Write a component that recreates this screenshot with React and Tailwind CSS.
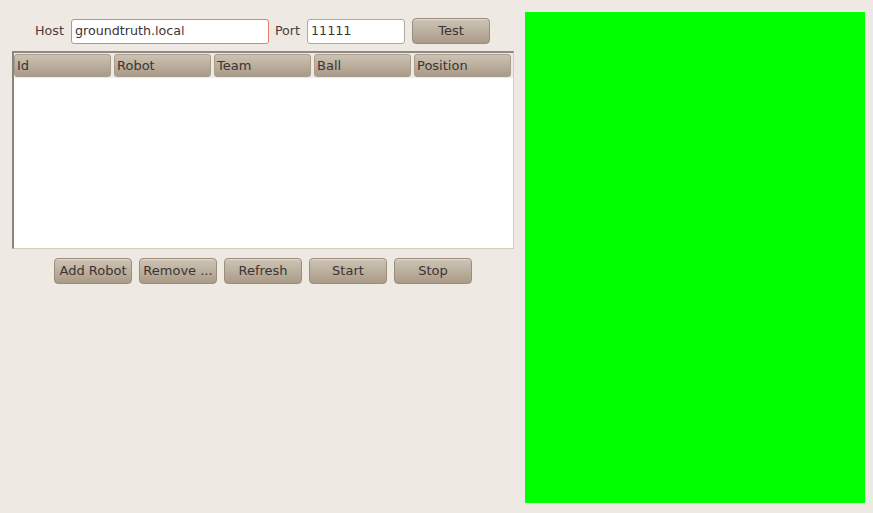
import React from 'react'

const btn =
  'h-[26px] w-[78px] rounded-[4px] border border-[#9a8d7b] bg-gradient-to-b from-[#cfc4b6] to-[#a99b87] text-[13px] text-[#3c3434] flex items-center justify-center shadow-[inset_0_1px_0_rgba(255,255,255,0.35)]'

const HeaderCell = ({ label }) => (
  <div className='h-[23px] flex-1 rounded-[3px] border border-[#a89c8a] bg-gradient-to-b from-[#cdc2b3] to-[#a99b88] px-[2px] flex items-center text-[13px] text-[#3c3434]'>
    {label}
  </div>
)

export default function App() {
  const columns = ['Id', 'Robot', 'Team', 'Ball', 'Position']
  const actions = ['Add Robot', 'Remove ...', 'Refresh', 'Start', 'Stop']

  return (
    <div
      className='w-[873px] h-[513px] bg-[#eee9e2] flex'
      style={{ fontFamily: '"DejaVu Sans", sans-serif' }}
    >
      <div className='w-[502px] ml-[12px] flex flex-col'>
        <div className='flex items-center mt-[18px] h-[26px]'>
          <span className='ml-[23px] text-[12.7px] text-[#4a3c3c]'>Host</span>
          <div className='ml-[7px] h-[25px] w-[198px] rounded-[3px] border border-[#e8806e] bg-white px-[3px] flex items-center text-[12.7px] text-[#3c3434]'>
            groundtruth.local
          </div>
          <span className='ml-[6px] text-[12.7px] text-[#4a3c3c]'>Port</span>
          <div className='ml-[7px] h-[25px] w-[98px] rounded-[3px] border border-[#b3a998] bg-white px-[3px] flex items-center text-[12.7px] text-[#3c3434]'>
            11111
          </div>
          <button className={btn + ' ml-[7px]'}>Test</button>
        </div>

        <div className='mt-[7px] w-[502px] h-[198px] border-t-2 border-l-2 border-r border-b border-t-[#8f8981] border-l-[#8a857e] border-r-[#d9cdb9] border-b-[#d9cdb9] bg-white flex flex-col'>
          <div className='flex gap-[3px] pt-[1px] pr-[2px] bg-[#eee9e2] h-[25px]'>
            {columns.map((c) => (
              <HeaderCell key={c} label={c} />
            ))}
          </div>
          <div className='flex-1 bg-white' />
        </div>

        <div className='mt-[9px] flex justify-center gap-[7px]'>
          {actions.map((a) => (
            <button key={a} className={btn}>
              {a}
            </button>
          ))}
        </div>
      </div>

      <div className='ml-[11px] mt-[12px] w-[340px] h-[491px] bg-[#00ff00]' />
    </div>
  )
}
